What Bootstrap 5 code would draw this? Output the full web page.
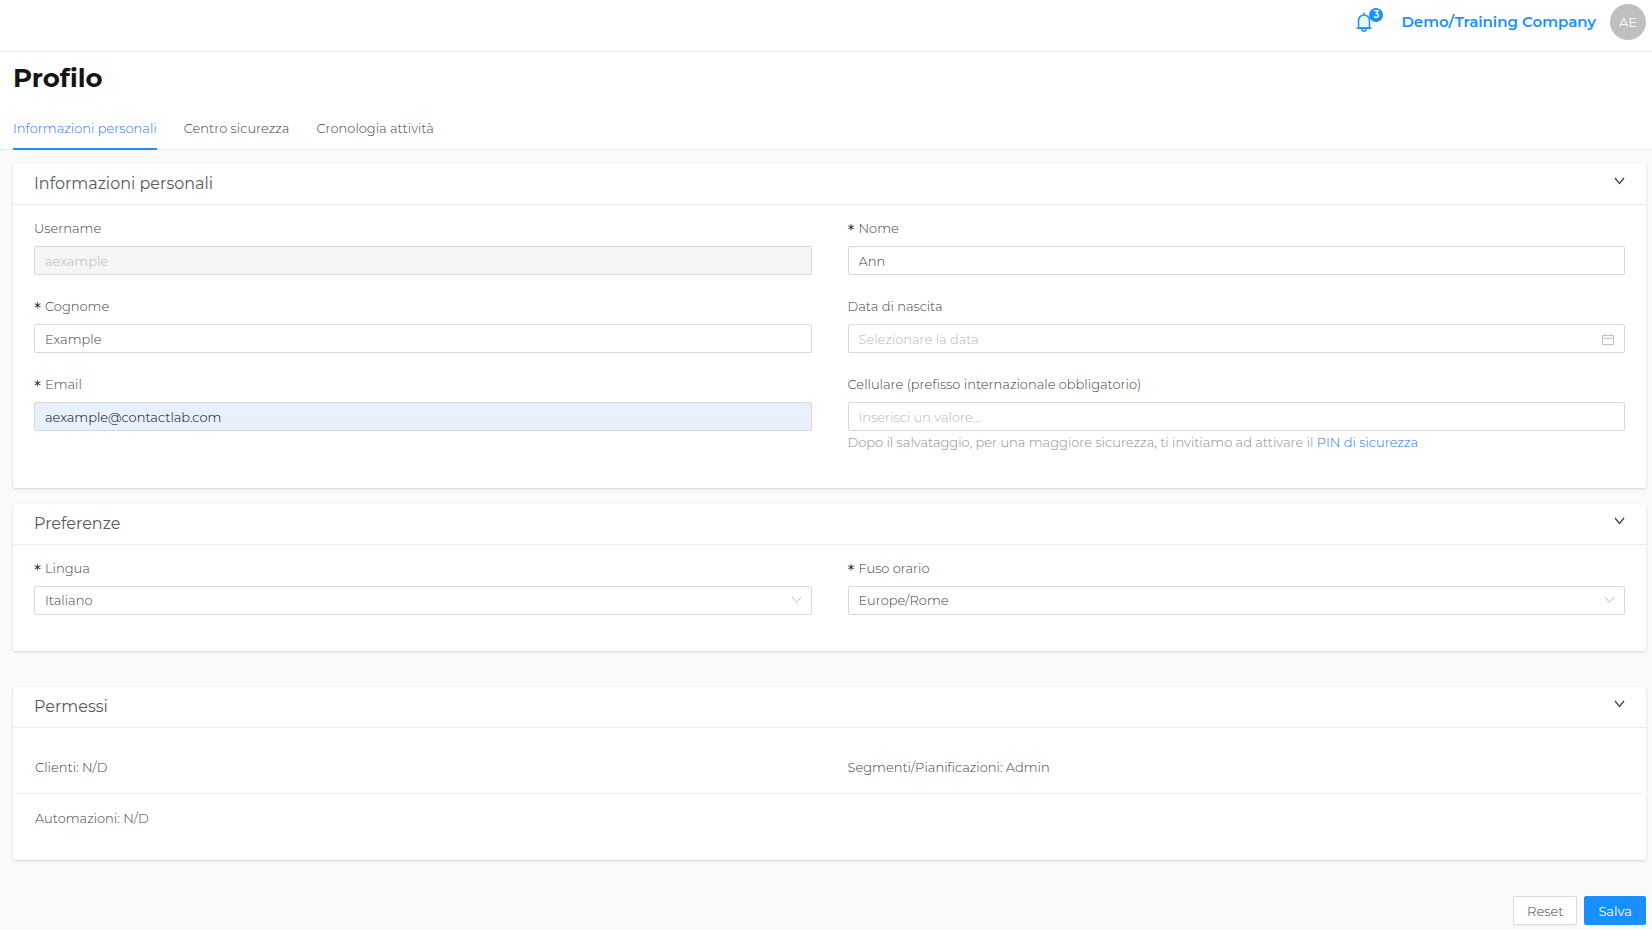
<!DOCTYPE html>
<html lang="it">
<head>
<meta charset="utf-8">
<meta name="viewport" content="width=device-width, initial-scale=1">
<title>Profilo</title>
<link href="https://cdn.jsdelivr.net/npm/bootstrap@5.3.0/dist/css/bootstrap.min.css" rel="stylesheet">
<style>
  body { font-family: Montserrat, Inter, "Open Sans", sans-serif; font-size: 13px; line-height: 20px; color: #404040; background: #fafafa; font-weight: 300; }
  a { color: #1677ff; text-decoration: none; }
  .topbar { height: 52px; padding: 0 6px 8px 13px; border-bottom: 1px solid #ececec; background: #fff; gap: 14px; }
  .bell-btn { color: #1890ff; margin-right: 15px; line-height: 0; }
  .bell-count { top: -4px; left: 13px; width: 14px; height: 14px; border-radius: 50%; background: #1890ff; color: #fff; font-size: 10px; line-height: 14px; font-weight: 600; }
  .company { font-size: 15px; font-weight: 600; color: #1890ff; }
  .avatar { width: 36px; height: 36px; background: #bfbfbf; color: #fff; font-size: 13px; font-weight: 400; }
  .page-head { background: #fff; padding: 10px 13px 0; border-bottom: 1px solid #ececec; }
  .page-title { font-size: 26px; line-height: 32px; font-weight: 700; color: #141414; margin: 0 0 14px; }
  .tabs { gap: 27px; margin-bottom: -1px; }
  .tabs .nav-link { padding: 10px 0; color: #404040; border-bottom: 2px solid transparent; }
  .tabs .nav-link.active { color: #1677ff; border-color: #1890ff; }
  main { padding: 14px 6px 5px 13px; }
  .panel { background: #fff; border-radius: 3px; box-shadow: 0 1px 3px rgba(0,0,0,.16); margin-bottom: 16px; }
  .panel-wide-gap { margin-top: 36px; }
  .panel-head { height: 40px; padding: 0 21px; border-bottom: 1px solid #ececec; box-sizing: content-box; }
  .panel-head h2 { font-size: 16px; line-height: 24px; margin: 0; font-weight: 400; color: #595959; }
  .toggle { padding: 0; border: 0; background: none; color: #434343; line-height: 0; }
  .toggle svg { margin-bottom: 6px; }
  .fields { display: grid; grid-template-columns: 1fr 1fr; gap: 21px 36px; padding: 13px 21px 36px; }
  .field label { display: block; margin-bottom: 8px; }
  .req::before { content: "*"; color: #141414; font: 14px/1 "DejaVu Sans", sans-serif; margin-right: 4px; vertical-align: -1px; }
  .field .form-control, .field .form-select { height: 29px; padding: 0 10px; border: 1px solid #d9d9d9; border-radius: 2px; font-size: 13px; font-weight: 300; color: #404040; box-shadow: none; background-color: #fff; background-image: none; }
  .field .form-control::placeholder { color: #b5b5b5; }
  .field .form-control:disabled { background: #f5f5f5; color: #b5b5b5; }
  .field .form-control.filled { background: #e8f0fe; color: #000; }
  .field-icon { position: absolute; right: 10px; top: 9px; color: #bfbfbf; pointer-events: none; }
  .help { color: #8c8c8c; margin-top: 1px; }
  .perms { padding: 13px 3px 17px; }
  .perm-row { display: grid; grid-template-columns: 1fr 1fr; padding: 14px 19px 15px; column-gap: 36px; }
  .perm-row:first-child { border-bottom: 1px solid #ececec; padding-top: 16px; padding-bottom: 16px; }
  .actions { gap: 7px; margin-top: 36px; }
  .actions .btn { height: 29px; padding: 0 13px; border-radius: 2px; font-size: 13px; line-height: 20px; font-weight: 300; box-shadow: 0 2px 0 rgba(0,0,0,.02); }
  .actions .btn-plain { background: #fff; border: 1px solid #d9d9d9; color: #404040; }
  .actions .btn-save { background: #1890ff; border: 1px solid #1890ff; color: #fff; font-weight: 400; }
</style>
</head>
<body>
<header class="topbar d-flex align-items-center justify-content-end">
  <button type="button" class="bell-btn btn p-0 border-0 position-relative" aria-label="Notifiche">
    <svg width="16" height="20" viewBox="0 0 16 20" fill="none" stroke="currentColor" stroke-width="1.500"><path d="M2.500 16V8.500a5.500 5.500 0 0 1 11 0V16z" fill="#e6f4ff"/><path d="M.5 16.300h15M8 3V.5M5.800 17c.2 3 4.200 3 4.400 0"/></svg>
    <span class="bell-count position-absolute text-center">3</span>
  </button>
  <a href="#" class="company">Demo/Training Company</a>
  <span class="avatar rounded-circle d-flex align-items-center justify-content-center">AE</span>
</header>

<div class="page-head">
  <h1 class="page-title">Profilo</h1>
  <nav class="tabs nav">
    <a class="nav-link active" href="#">Informazioni personali</a>
    <a class="nav-link" href="#">Centro sicurezza</a>
    <a class="nav-link" href="#">Cronologia attività</a>
  </nav>
</div>

<main>
  <form>
    <section class="panel">
      <div class="panel-head d-flex align-items-center justify-content-between">
        <h2>Informazioni personali</h2>
        <button type="button" class="toggle" aria-label="Comprimi"><svg width="11" height="12" viewBox="0 0 11 12" fill="none" stroke="currentColor" stroke-width="1.300"><path d="M1 3l4.500 5.500L10 3"/></svg></button>
      </div>
      <div class="fields">
        <div class="field"><label for="username">Username</label><input id="username" class="form-control" value="aexample" disabled></div>
        <div class="field"><label for="nome" class="req">Nome</label><input id="nome" class="form-control" value="Ann"></div>
        <div class="field"><label for="cognome" class="req">Cognome</label><input id="cognome" class="form-control" value="Example"></div>
        <div class="field"><label for="nascita">Data di nascita</label>
          <div class="position-relative"><input id="nascita" class="form-control" placeholder="Selezionare la data">
            <svg class="field-icon" width="13" height="13" viewBox="0 0 13 13" fill="none" stroke="currentColor"><path d="M.5 2.500h11v9H.5zM.5 5.500h11M3.500 .5v3M8.500 .5v3"/></svg></div>
        </div>
        <div class="field"><label for="email" class="req">Email</label><input id="email" type="email" class="form-control filled" value="aexample@contactlab.com"></div>
        <div class="field"><label for="cell">Cellulare (prefisso internazionale obbligatorio)</label><input id="cell" type="tel" class="form-control" placeholder="Inserisci un valore...">
          <div class="help">Dopo il salvataggio, per una maggiore sicurezza, ti invitiamo ad attivare il <a href="#">PIN di sicurezza</a></div>
        </div>
      </div>
    </section>

    <section class="panel">
      <div class="panel-head d-flex align-items-center justify-content-between">
        <h2>Preferenze</h2>
        <button type="button" class="toggle" aria-label="Comprimi"><svg width="11" height="12" viewBox="0 0 11 12" fill="none" stroke="currentColor" stroke-width="1.300"><path d="M1 3l4.500 5.500L10 3"/></svg></button>
      </div>
      <div class="fields">
        <div class="field"><label for="lingua" class="req">Lingua</label>
          <div class="position-relative"><select id="lingua" class="form-select"><option>Italiano</option></select>
            <svg class="field-icon" width="11" height="12" viewBox="0 0 11 12" fill="none" stroke="currentColor"><path d="M1 2l4.500 5.500L10 2"/></svg></div></div>
        <div class="field"><label for="fuso" class="req">Fuso orario</label>
          <div class="position-relative"><select id="fuso" class="form-select"><option>Europe/Rome</option></select>
            <svg class="field-icon" width="11" height="12" viewBox="0 0 11 12" fill="none" stroke="currentColor"><path d="M1 2l4.500 5.500L10 2"/></svg></div></div>
      </div>
    </section>

    <section class="panel panel-wide-gap">
      <div class="panel-head d-flex align-items-center justify-content-between">
        <h2>Permessi</h2>
        <button type="button" class="toggle" aria-label="Comprimi"><svg width="11" height="12" viewBox="0 0 11 12" fill="none" stroke="currentColor" stroke-width="1.300"><path d="M1 3l4.500 5.500L10 3"/></svg></button>
      </div>
      <div class="perms">
        <div class="perm-row"><div>Clienti: N/D</div><div>Segmenti/Pianificazioni: Admin</div></div>
        <div class="perm-row"><div>Automazioni: N/D</div></div>
      </div>
    </section>

    <div class="actions d-flex justify-content-end">
      <button type="reset" class="btn btn-plain">Reset</button>
      <button type="submit" class="btn btn-save">Salva</button>
    </div>
  </form>
</main>
<script src="https://cdn.jsdelivr.net/npm/bootstrap@5.3.0/dist/js/bootstrap.bundle.min.js"></script>
</body>
</html>
